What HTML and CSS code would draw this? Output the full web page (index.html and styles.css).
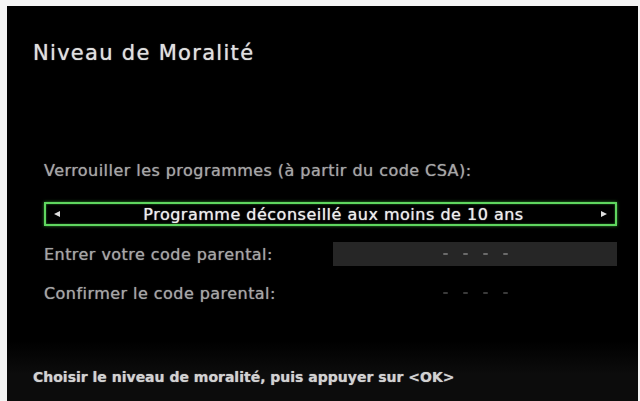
FILE: index.html
```html
<!DOCTYPE html>
<html lang="fr">
<head>
<meta charset="utf-8">
<link rel="stylesheet" href="styles.css">
</head>
<body>
<div class="screen">
  <h1 class="title">Niveau de Moralité</h1>
  <div class="content">
    <div class="label lock">Verrouiller les programmes (à partir du code CSA):</div>
    <div class="selector">
      <span class="arrow left"></span>
      <span class="sel-text">Programme déconseillé aux moins de 10 ans</span>
      <span class="arrow right"></span>
    </div>
    <div class="row">
      <span class="label">Entrer votre code parental:</span>
      <span class="field active"><i></i><i></i><i></i><i></i></span>
    </div>
    <div class="row second">
      <span class="label">Confirmer le code parental:</span>
      <span class="field"><i></i><i></i><i></i><i></i></span>
    </div>
  </div>
  <div class="footer">Choisir le niveau de moralité, puis appuyer sur &lt;OK&gt;</div>
</div>
</body>
</html>
```
FILE: styles.css
```css
html, body {
  margin: 0;
  padding: 0;
  background: #f4f4f4;
}
body {
  width: 640px;
  height: 401px;
  overflow: hidden;
  font-family: "DejaVu Sans", sans-serif;
}
.screen {
  margin: 6px 2px 0 7px;
  height: 395px;
  background: #000;
  display: flex;
  flex-direction: column;
}
.title {
  margin: 0;
  padding: 34px 0 0 26px;
  font-size: 21px;
  line-height: 26px;
  height: 26px;
  font-weight: normal;
  letter-spacing: 1.3px;
  color: #e0e0e0;
  text-shadow: 0 0 1px #bbb;
}
.content {
  padding: 93px 0 0 37px;
  flex: 1;
}
.label {
  color: #a6a6a6;
  font-size: 16px;
  letter-spacing: 0.45px;
  text-shadow: 0 0 1px #888;
}
.lock {
  height: 24px;
  line-height: 24px;
}
.selector {
  margin-top: 19px;
  width: 553px;
  height: 20px;
  border: 2px solid #5fd65f;
  box-shadow: 0 0 3px #2e8a2e, inset 0 0 2px #2e8a2e;
  display: flex;
  align-items: center;
  justify-content: space-between;
  padding: 0 8px;
  box-sizing: content-box;
}
.sel-text {
  color: #ededed;
  font-size: 16px;
  letter-spacing: 0.5px;
  text-shadow: 0 0 1px #ccc;
  margin-left: 6px;
}
.arrow {
  width: 0;
  height: 0;
  border-top: 3.5px solid transparent;
  border-bottom: 3.5px solid transparent;
}
.arrow.left { border-right: 6px solid #ddd; }
.arrow.right { border-left: 6px solid #ddd; }
.row {
  display: flex;
  align-items: center;
  justify-content: space-between;
  height: 24px;
  width: 573px;
  margin-top: 16px;
}
.row.second { margin-top: 15px; }
.field {
  width: 284px;
  height: 24px;
  display: flex;
  align-items: center;
  justify-content: center;
  gap: 15px;
}
.field.active { background: #262626; }
.field i {
  width: 5px;
  height: 2px;
  border-radius: 1px;
  background: #6a6a6a;
}
.field:not(.active) i { background: #3a3a3a; }
.footer {
  height: 60px;
  background: linear-gradient(#000, #0c0c0c 55%);
  color: #d2d2d2;
  font-size: 14px;
  font-weight: bold;
  line-height: 18px;
  padding: 27px 0 0 26px;
  box-sizing: border-box;
  text-shadow: 0 0 1px #999;
}
```
